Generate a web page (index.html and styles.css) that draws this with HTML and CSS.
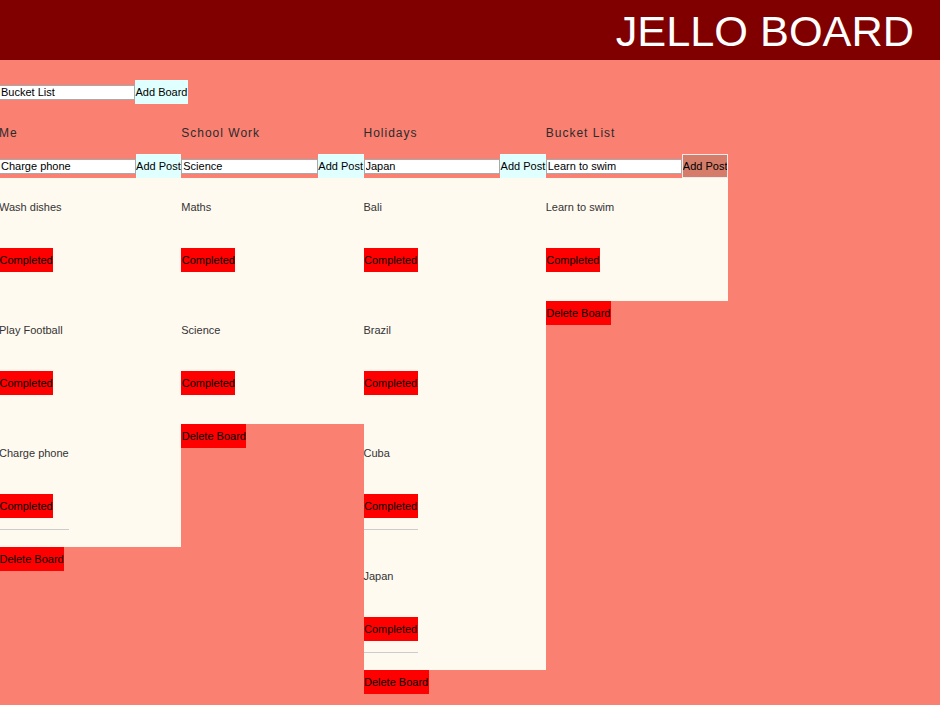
FILE: index.html
```html
<!DOCTYPE html>
<html lang="en">
<head>
<meta charset="utf-8">
<title>Jello Board</title>
<link rel="stylesheet" href="styles.css">
</head>
<body>
<header class="topbar">
  <h1 class="brand">JELLO BOARD</h1>
</header>
<main class="page">
  <div class="new-board">
    <input class="field field-board" type="text" value="Bucket List">
    <button class="btn btn-add">Add Board</button>
  </div>
  <div class="boards">
    <section class="board">
      <h3 class="board-title">Me</h3>
      <div class="new-post">
        <input class="field" type="text" value="Charge phone">
        <button class="btn btn-add">Add Post</button>
      </div>
      <div class="posts">
        <div class="post"><div class="post-body"><p class="post-text">Wash dishes</p><button class="btn btn-red">Completed</button><div class="post-rule"></div></div></div>
        <div class="post"><div class="post-body"><p class="post-text">Play Football</p><button class="btn btn-red">Completed</button><div class="post-rule"></div></div></div>
        <div class="post"><div class="post-body"><p class="post-text">Charge phone</p><button class="btn btn-red">Completed</button><div class="post-rule is-visible"></div></div></div>
      </div>
      <button class="btn btn-red btn-delete">Delete Board</button>
    </section>
    <section class="board">
      <h3 class="board-title">School Work</h3>
      <div class="new-post">
        <input class="field" type="text" value="Science">
        <button class="btn btn-add">Add Post</button>
      </div>
      <div class="posts">
        <div class="post"><div class="post-body"><p class="post-text">Maths</p><button class="btn btn-red">Completed</button><div class="post-rule"></div></div></div>
        <div class="post"><div class="post-body"><p class="post-text">Science</p><button class="btn btn-red">Completed</button><div class="post-rule"></div></div></div>
      </div>
      <button class="btn btn-red btn-delete">Delete Board</button>
    </section>
    <section class="board">
      <h3 class="board-title">Holidays</h3>
      <div class="new-post">
        <input class="field" type="text" value="Japan">
        <button class="btn btn-add">Add Post</button>
      </div>
      <div class="posts">
        <div class="post"><div class="post-body"><p class="post-text">Bali</p><button class="btn btn-red">Completed</button><div class="post-rule"></div></div></div>
        <div class="post"><div class="post-body"><p class="post-text">Brazil</p><button class="btn btn-red">Completed</button><div class="post-rule"></div></div></div>
        <div class="post"><div class="post-body"><p class="post-text">Cuba</p><button class="btn btn-red">Completed</button><div class="post-rule is-visible"></div></div></div>
        <div class="post"><div class="post-body"><p class="post-text">Japan</p><button class="btn btn-red">Completed</button><div class="post-rule is-visible"></div></div></div>
      </div>
      <button class="btn btn-red btn-delete">Delete Board</button>
    </section>
    <section class="board">
      <h3 class="board-title">Bucket List</h3>
      <div class="new-post">
        <input class="field" type="text" value="Learn to swim">
        <button class="btn btn-add btn-hover">Add Post</button>
      </div>
      <div class="posts">
        <div class="post"><div class="post-body"><p class="post-text">Learn to swim</p><button class="btn btn-red">Completed</button><div class="post-rule"></div></div></div>
      </div>
      <button class="btn btn-red btn-delete">Delete Board</button>
    </section>
  </div>
</main>
</body>
</html>
```

FILE: styles.css
```css
html, body {
  margin: 0;
  padding: 0;
  background: #fa8072;
  font-family: "Liberation Sans", Arial, sans-serif;
  min-height: 100%;
}

.topbar {
  height: 60px;
  background: #800000;
  box-sizing: border-box;
  padding-top: 3px;
}

.brand {
  margin: 0;
  padding-right: 26px;
  text-align: right;
  font-size: 43.3px;
  line-height: 57px;
  font-weight: normal;
  color: #ffffff;
}

.page {
  margin-left: -1px;
}

.new-board {
  display: flex;
  align-items: center;
  margin-top: 20px;
}

.field {
  box-sizing: border-box;
  height: 15px;
  margin: 0;
  padding: 0 1px;
  border: 1px solid #a9a9a9;
  background: #ffffff;
  color: #000000;
  font-family: "Liberation Sans", Arial, sans-serif;
  font-size: 11px;
  outline: none;
}

.field-board {
  width: 136px;
}

.btn {
  height: 24px;
  margin: 0;
  padding: 0 0.5px;
  border: none;
  border-radius: 0;
  color: #000000;
  font-family: "Liberation Sans", Arial, sans-serif;
  font-size: 11px;
  line-height: 24px;
  white-space: nowrap;
  cursor: pointer;
}

.btn-add {
  background: #e0ffff;
}

.btn-red {
  background: #ff0000;
}

.btn-hover {
  background: #d57d6a;
  outline: 1px solid #ececec;
  outline-offset: -1px;
}

.boards {
  display: flex;
  align-items: flex-start;
}

.board {
  width: 182.25px;
  display: flex;
  flex-direction: column;
  align-items: flex-start;
}

.board-title {
  margin: 22px 0 14px 0;
  font-size: 12px;
  line-height: 14px;
  font-weight: normal;
  letter-spacing: 1px;
  color: #2b2b2b;
}

.new-post {
  align-self: stretch;
  display: flex;
  align-items: center;
}

.new-post .field {
  flex: 1;
  min-width: 0;
}

.posts {
  align-self: stretch;
  background: #fffaf0;
}

.post {
  height: 123px;
  display: flex;
  align-items: flex-start;
}

.post-body {
  padding-top: 23px;
  display: flex;
  flex-direction: column;
  align-items: flex-start;
}

.post-text {
  margin: 0;
  font-size: 11px;
  line-height: 13px;
  color: #333333;
}

.post-body .btn {
  margin-top: 34px;
}

.post-rule {
  align-self: stretch;
  height: 1px;
  margin-top: 11px;
}

.post-rule.is-visible {
  background: #cccccc;
}

.btn-delete {
  display: block;
}
```
